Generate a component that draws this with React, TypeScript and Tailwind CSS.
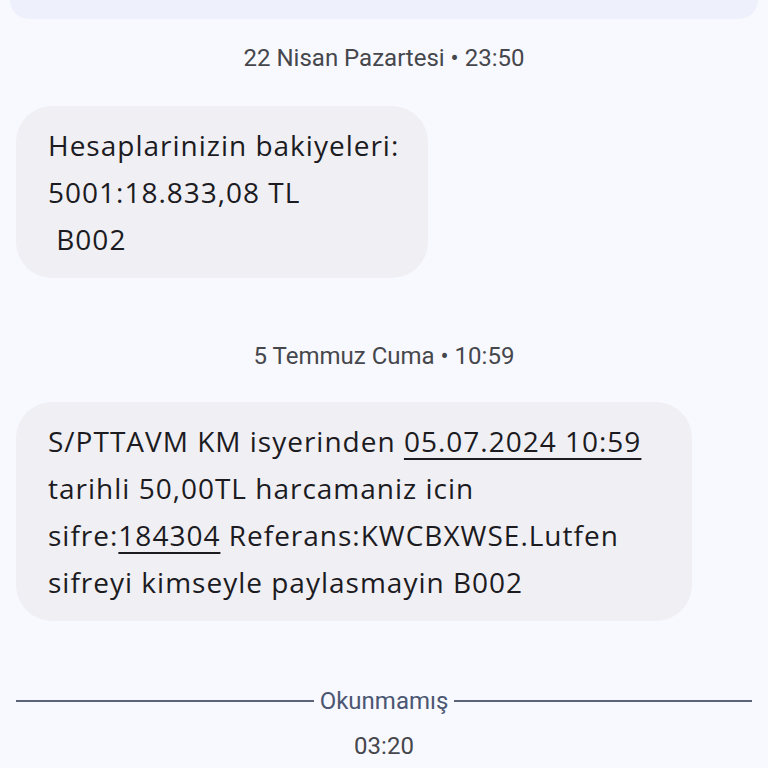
import React from "react";

const Stamp = ({ children }: { children: React.ReactNode }) => (
  <div
    className="text-center text-[24px] leading-[28px] text-[#46474c]"
    style={{ fontFamily: "Roboto, sans-serif" }}
  >
    {children}
  </div>
);

const Bubble = ({ children, className = "" }: { children: React.ReactNode; className?: string }) => (
  <div
    className={
      "rounded-[36px] bg-[#f0eff4] pl-[32px] pr-[24px] pt-[16px] pb-[15px] text-[28px] leading-[47px] tracking-[1px] text-[#1c1b1f] " +
      className
    }
    style={{ fontFamily: "'Open Sans', Roboto, sans-serif" }}
  >
    {children}
  </div>
);

export default function App() {
  return (
    <div className="h-[768px] w-[768px] overflow-hidden bg-[#f8f9fe]">
      <div className="mx-[10px] h-[19px] rounded-b-[24px] bg-[#eef1fb]" />

      <div className="pt-[25px]">
        <Stamp>22 Nisan Pazartesi • 23:50</Stamp>
      </div>

      <div className="mt-[34px] px-[16px]">
        <Bubble className="w-[412px]">
          <div>Hesaplarinizin bakiyeleri:</div>
          <div>5001:18.833,08 TL</div>
          <div>&nbsp;B002</div>
        </Bubble>
      </div>

      <div className="mt-[64px]">
        <Stamp>5 Temmuz Cuma • 10:59</Stamp>
      </div>

      <div className="mt-[32px] px-[16px]">
        <Bubble className="w-[676px]">
          <div className="whitespace-nowrap">
            S/PTTAVM KM isyerinden{" "}
            <span className="underline decoration-[2px] underline-offset-[6px]">05.07.2024 10:59</span>
          </div>
          <div>tarihli 50,00TL harcamaniz icin</div>
          <div className="whitespace-nowrap">
            sifre:<span className="underline decoration-[2px] underline-offset-[6px]">184304</span>{" "}
            Referans:KWCBXWSE.Lutfen
          </div>
          <div>sifreyi kimseyle paylasmayin B002</div>
        </Bubble>
      </div>

      <div className="mt-[66px] flex items-center px-[16px]">
        <div className="h-[2px] flex-1 bg-[#5b6478]" />
        <div
          className="px-[6px] text-[24px] leading-[28px] text-[#4b5772]"
          style={{ fontFamily: "Roboto, sans-serif" }}
        >
          Okunmamış
        </div>
        <div className="h-[2px] flex-1 bg-[#5b6478]" />
      </div>

      <div className="mt-[17px]">
        <Stamp>03:20</Stamp>
      </div>
    </div>
  );
}
